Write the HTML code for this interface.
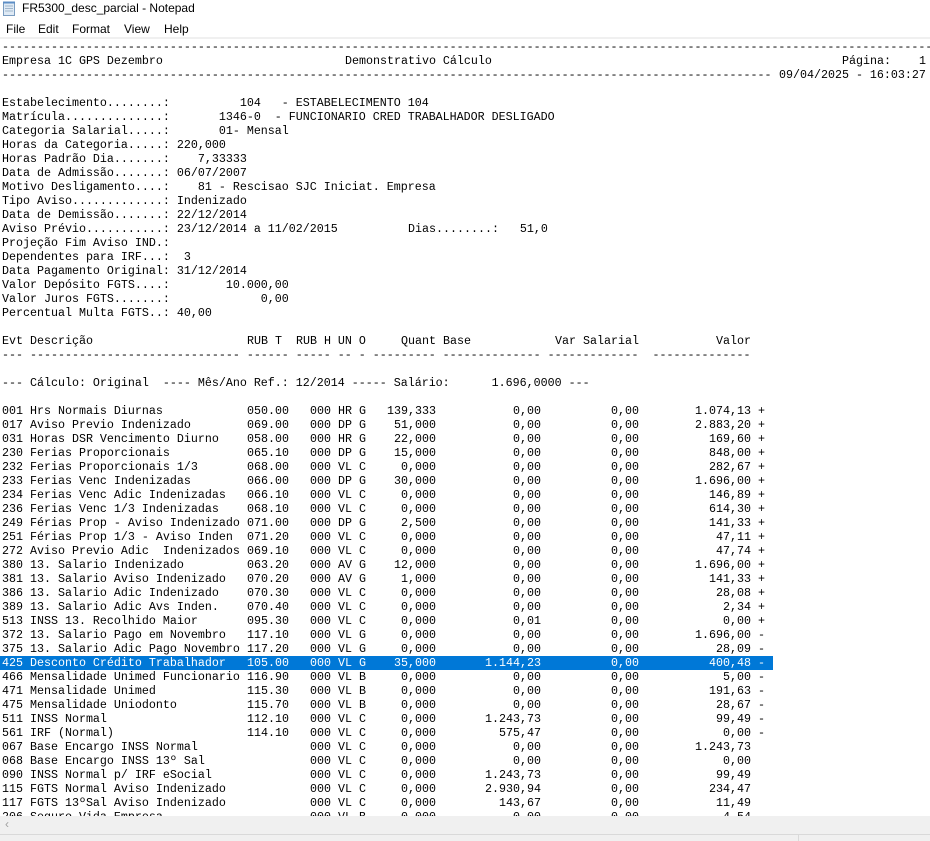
<!DOCTYPE html>
<html><head><meta charset="utf-8">
<style>
*{margin:0;padding:0;box-sizing:border-box}
html,body{width:930px;height:841px;overflow:hidden;background:#fff}
body{position:relative;font-family:"Liberation Sans",sans-serif}
.title{position:absolute;left:22px;top:0;height:16px;font-size:12px;line-height:16px;color:#000}
.menu{position:absolute;top:21px;font-size:12px;line-height:16px;color:#000}
.sep{position:absolute;left:0;top:37px;width:930px;height:2px;background:#f0f0f0}
.txt{position:absolute;left:0;top:40px;width:930px;height:776px;overflow:hidden}
.l{position:absolute;left:2px;white-space:pre;font-family:"Liberation Mono",monospace;font-size:11.67px;line-height:14px;height:14px;color:#000}
.a{position:absolute;white-space:pre;font-family:"Liberation Mono",monospace;font-size:11.67px;line-height:14px;color:#000}
.R{text-align:right}
.sel{position:absolute;left:0;width:773px;height:14px;background:#0078d7}
.w{color:#fff}
.sb{position:absolute;left:0;top:816px;width:930px;height:18px;background:#f0f0f0}
.st{position:absolute;left:0;top:834px;width:930px;height:7px;background:#f0f0f0;border-top:1px solid #d9d9d9}
</style></head><body>
<svg style="position:absolute;left:2px;top:1px" width="15" height="15" viewBox="0 0 15 15">
<rect x="1.5" y="1.5" width="11" height="13" fill="#dfeaf5" stroke="#7a9cc0"/>
<rect x="1" y="0.5" width="12" height="2" fill="#5c8ec6"/>
<line x1="3" y1="5" x2="11" y2="5" stroke="#9fb5cc"/>
<line x1="3" y1="7.5" x2="11" y2="7.5" stroke="#9fb5cc"/>
<line x1="3" y1="10" x2="11" y2="10" stroke="#9fb5cc"/>
</svg>
<div class="title">FR5300_desc_parcial - Notepad</div>
<div class="menu" style="left:6px">File</div>
<div class="menu" style="left:38px">Edit</div>
<div class="menu" style="left:72px">Format</div>
<div class="menu" style="left:124px">View</div>
<div class="menu" style="left:164px">Help</div>
<div class="sep"></div>

<div class="txt">
<div class="l" style="top:0px">-------------------------------------------------------------------------------------------------------------------------------------</div>
<div class="l" style="top:14px">Empresa 1C GPS Dezembro</div>
<div class="a" style="top:14px;left:345px">Demonstrativo Cálculo</div>
<div class="a" style="top:14px;left:842px">Página:    1</div>
<div class="l" style="top:28px">--------------------------------------------------------------------------------------------------------------</div>
<div class="a" style="top:28px;left:779px">09/04/2025 - 16:03:27</div>

<div class="l" style="top:56px">Estabelecimento........:          104   - ESTABELECIMENTO 104</div>
<div class="l" style="top:70px">Matrícula..............:       1346-0  - FUNCIONARIO CRED TRABALHADOR DESLIGADO</div>
<div class="l" style="top:84px">Categoria Salarial.....:       01- Mensal</div>
<div class="l" style="top:98px">Horas da Categoria.....: 220,000</div>
<div class="l" style="top:112px">Horas Padrão Dia.......:    7,33333</div>
<div class="l" style="top:126px">Data de Admissão.......: 06/07/2007</div>
<div class="l" style="top:140px">Motivo Desligamento....:    81 - Rescisao SJC Iniciat. Empresa</div>
<div class="l" style="top:154px">Tipo Aviso.............: Indenizado</div>
<div class="l" style="top:168px">Data de Demissão.......: 22/12/2014</div>
<div class="l" style="top:182px">Aviso Prévio...........: 23/12/2014 a 11/02/2015</div>
<div class="a" style="top:182px;left:408px">Dias........:   51,0</div>
<div class="l" style="top:196px">Projeção Fim Aviso IND.:</div>
<div class="l" style="top:210px">Dependentes para IRF...:  3</div>
<div class="l" style="top:224px">Data Pagamento Original: 31/12/2014</div>
<div class="l" style="top:238px">Valor Depósito FGTS....:        10.000,00</div>
<div class="l" style="top:252px">Valor Juros FGTS.......:             0,00</div>
<div class="l" style="top:266px">Percentual Multa FGTS..: 40,00</div>

<div class="l" style="top:294px">Evt Descrição</div>
<div class="a" style="top:294px;left:247px">RUB T  RUB H UN O</div>
<div class="a" style="top:294px;left:401px">Quant Base</div>
<div class="a" style="top:294px;left:555px">Var Salarial</div>
<div class="a" style="top:294px;left:716px">Valor</div>
<div class="l" style="top:308px">--- ------------------------------ ------ ----- -- - --------- -------------- -------------  --------------</div>
<div class="l" style="top:336px">--- Cálculo: Original  ---- Mês/Ano Ref.: 12/2014 ----- Salário:      1.696,0000 ---</div>

<div id="rows"></div>
</div>

<div class="sb"><span style="position:absolute;left:5px;top:1px;font-size:12px;color:#a0a0a0">&lsaquo;</span></div>
<div class="st"><div style="position:absolute;left:798px;top:0;width:1px;height:7px;background:#d9d9d9"></div></div>

<script>
var rows=[
["001 Hrs Normais Diurnas","050.00","HR","G","139,333","0,00","0,00","1.074,13","+"],
["017 Aviso Previo Indenizado","069.00","DP","G","51,000","0,00","0,00","2.883,20","+"],
["031 Horas DSR Vencimento Diurno","058.00","HR","G","22,000","0,00","0,00","169,60","+"],
["230 Ferias Proporcionais","065.10","DP","G","15,000","0,00","0,00","848,00","+"],
["232 Ferias Proporcionais 1/3","068.00","VL","C","0,000","0,00","0,00","282,67","+"],
["233 Ferias Venc Indenizadas","066.00","DP","G","30,000","0,00","0,00","1.696,00","+"],
["234 Ferias Venc Adic Indenizadas","066.10","VL","C","0,000","0,00","0,00","146,89","+"],
["236 Ferias Venc 1/3 Indenizadas","068.10","VL","C","0,000","0,00","0,00","614,30","+"],
["249 Férias Prop - Aviso Indenizado","071.00","DP","G","2,500","0,00","0,00","141,33","+"],
["251 Férias Prop 1/3 - Aviso Inden","071.20","VL","C","0,000","0,00","0,00","47,11","+"],
["272 Aviso Previo Adic  Indenizados","069.10","VL","C","0,000","0,00","0,00","47,74","+"],
["380 13. Salario Indenizado","063.20","AV","G","12,000","0,00","0,00","1.696,00","+"],
["381 13. Salario Aviso Indenizado","070.20","AV","G","1,000","0,00","0,00","141,33","+"],
["386 13. Salario Adic Indenizado","070.30","VL","C","0,000","0,00","0,00","28,08","+"],
["389 13. Salario Adic Avs Inden.","070.40","VL","C","0,000","0,00","0,00","2,34","+"],
["513 INSS 13. Recolhido Maior","095.30","VL","C","0,000","0,01","0,00","0,00","+"],
["372 13. Salario Pago em Novembro","117.10","VL","G","0,000","0,00","0,00","1.696,00","-"],
["375 13. Salario Adic Pago Novembro","117.20","VL","G","0,000","0,00","0,00","28,09","-"],
["425 Desconto Crédito Trabalhador","105.00","VL","G","35,000","1.144,23","0,00","400,48","-"],
["466 Mensalidade Unimed Funcionario","116.90","VL","B","0,000","0,00","0,00","5,00","-"],
["471 Mensalidade Unimed","115.30","VL","B","0,000","0,00","0,00","191,63","-"],
["475 Mensalidade Uniodonto","115.70","VL","B","0,000","0,00","0,00","28,67","-"],
["511 INSS Normal","112.10","VL","C","0,000","1.243,73","0,00","99,49","-"],
["561 IRF (Normal)","114.10","VL","C","0,000","575,47","0,00","0,00","-"],
["067 Base Encargo INSS Normal","","VL","C","0,000","0,00","0,00","1.243,73",""],
["068 Base Encargo INSS 13º Sal","","VL","C","0,000","0,00","0,00","0,00",""],
["090 INSS Normal p/ IRF eSocial","","VL","C","0,000","1.243,73","0,00","99,49",""],
["115 FGTS Normal Aviso Indenizado","","VL","C","0,000","2.930,94","0,00","234,47",""],
["117 FGTS 13ºSal Aviso Indenizado","","VL","C","0,000","143,67","0,00","11,49",""],
["206 Seguro Vida Empresa","","VL","B","0,000","0,00","0,00","4,54",""]
];
var h="";
function X(c){return 2+7*c;}
rows.forEach(function(r,i){
 var t=364+14*i;var cl="";
 if(r[0].indexOf("425")==0){h+='<div class="sel" style="top:'+t+'px"></div>';cl=" w";}
 function s(c,txt){return '<div class="a'+cl+'" style="top:'+t+'px;left:'+X(c)+'px">'+txt+'</div>';}
 function rr(c,w,txt){return '<div class="a R'+cl+'" style="top:'+t+'px;left:'+X(c)+'px;width:'+(w*7)+'px">'+txt+'</div>';}
 h+=s(0,r[0]);
 if(r[1])h+=s(35,r[1]);
 h+=s(44,"000")+s(48,r[2])+s(51,r[3]);
 h+=rr(53,9,r[4])+rr(63,14,r[5])+rr(78,13,r[6])+rr(93,14,r[7]);
 if(r[8])h+=s(108,r[8]);
});
document.getElementById("rows").innerHTML=h;
</script>
</body></html>
